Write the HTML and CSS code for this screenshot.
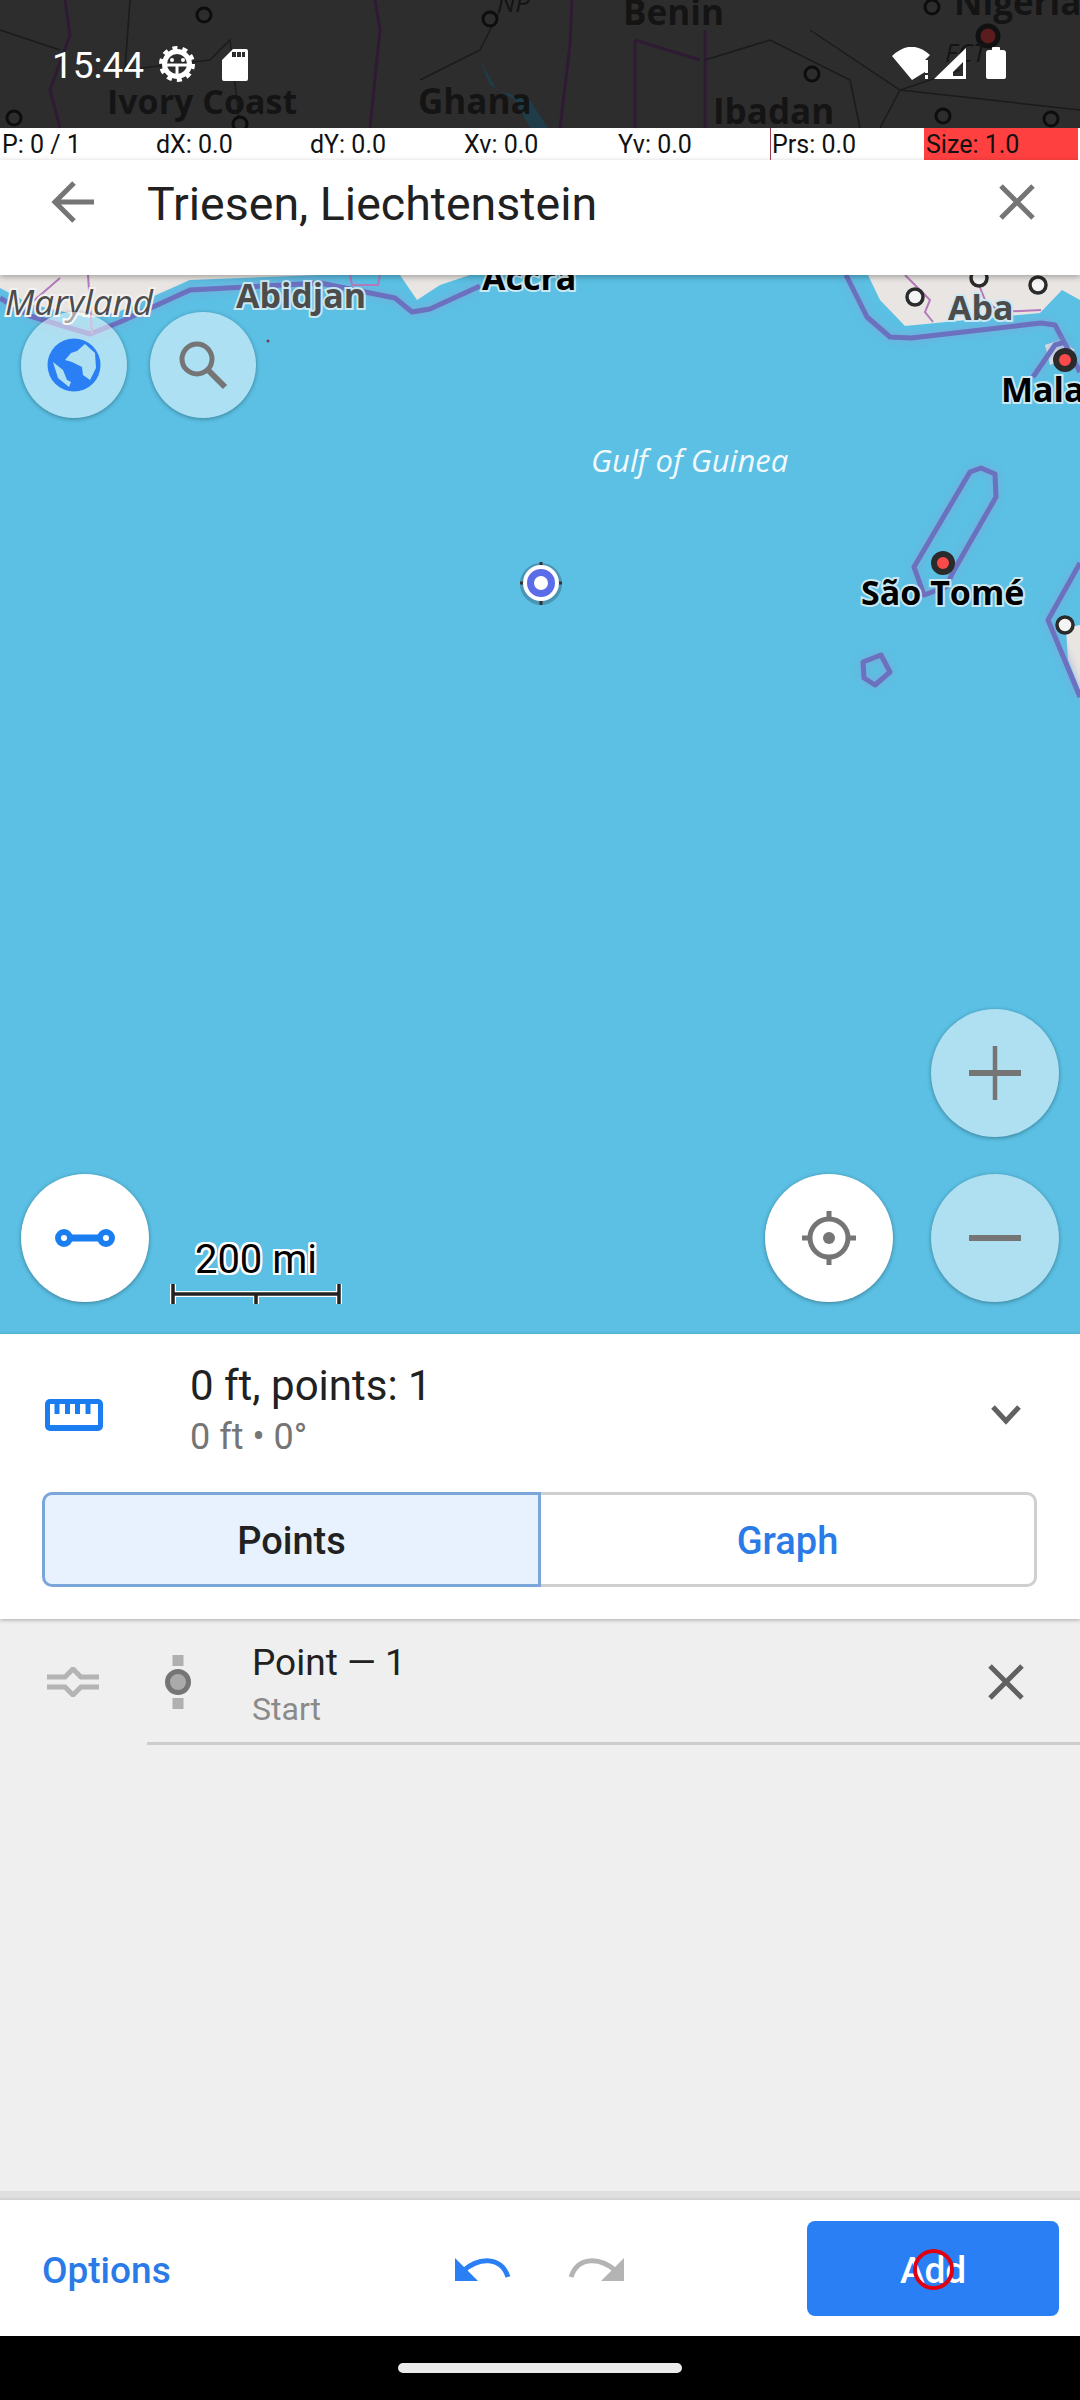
FILE: index.html
```html
<!DOCTYPE html>
<html lang="en">
<head>
<meta charset="UTF-8">
<meta name="viewport" content="width=device-width, initial-scale=1.0">
<title>Plan route</title>
<link rel="stylesheet" href="styles.css">
</head>
<body>
    <div class="map-area">
        <!-- the map itself, a free canvas of shapes and place names -->
        <svg class="map-canvas" viewBox="0 0 1080 1334">
            <rect class="water" width="1080" height="1334"/>

            <!-- land, west and east coast -->
            <path class="land" d="M0 275V288L30 304L90 318L118 312L190 280L320 275Z"/>
            <path class="land" d="M400 275L417 300L440 285L470 275Z"/>
            <path class="land" d="M868 275L880 300L905 326L1040 313L1062 290L1080 300V275Z"/>
            <path class="land" d="M1080 625L1066 628L1068 660L1080 690Z"/>
            <path class="land" d="M1045 345L1060 340L1075 350L1065 358L1050 365Z"/>

            <!-- sea borders -->
            <path class="sea-border" d="M0 298L30 316L90 334L120 322L190 290L320 283L395 298L412 312L430 309L480 286"/>
            <path class="sea-border" d="M846 275L867 317L890 337L911 338L1041 323L1055 325L1080 372"/>
            <path class="sea-border" d="M1033 377L1055 345L1065 342"/>
            <path class="sea-border" d="M970 472L981 468L995 474L996 497L953 572L946 587L924 595L914 567Z"/>
            <path class="sea-border" d="M863 662L881 655L890 672L875 685L864 678Z"/>
            <path class="sea-border" d="M1080 563L1048 620L1080 697"/>
            <path class="land-border" d="M30 304L60 278M88 275L92 334M350 275L352 285H378L380 275"/>
            <path class="land-border" d="M905 275L930 300L925 312L933 322M975 275L985 300L1000 312L1041 310"/>

            <!-- dimmed part under the status bar -->
            <rect class="dim-land" width="1080" height="128"/>
            <path class="dim-lake" d="M480 60L497 90L530 100L548 128H530L515 100L490 85Z"/>
            <path class="dim-border" d="M65 0L70 35L50 90L60 128M375 0L380 30L370 128M572 0L570 45L560 128M635 40V128M705 30V128M635 40L700 60"/>
            <path class="dim-line" d="M0 30L60 50M130 0L125 70L210 60L230 40L240 128M420 80L480 50L500 10M705 60L770 40L850 80L860 128M810 30L900 90L1080 110M880 128L900 90L960 70"/>

            <circle class="dim-town" cx="204" cy="15" r="7"/>
            <circle class="dim-town" cx="490" cy="19" r="7"/>
            <circle class="dim-town" cx="932" cy="7" r="7"/>
            <circle class="dim-town" cx="812" cy="74" r="7"/>
            <circle class="dim-town" cx="943" cy="116" r="7"/>
            <circle class="dim-town" cx="1051" cy="119" r="7"/>
            <circle class="dim-town" cx="14" cy="118" r="7"/>
            <circle class="dim-town" cx="240" cy="124" r="7"/>
            <circle class="dim-city" cx="988" cy="36" r="10"/>

            <text class="dim-label" x="623" y="25">Benin</text>
            <text class="dim-label" x="954" y="15">Nigeria</text>
            <text class="dim-label dim-country" x="107" y="114">Ivory Coast</text>
            <text class="dim-label" x="418" y="114">Ghana</text>
            <text class="dim-label" x="713" y="124">Ibadan</text>
            <text class="dim-small" x="497" y="12">NP</text>
            <text class="dim-small" x="945" y="62">FCT</text>

            <circle class="town" cx="915" cy="297" r="8"/>
            <circle class="town" cx="979" cy="278" r="8"/>
            <circle class="town" cx="1038" cy="285" r="8"/>
            <circle class="town" cx="1065" cy="625" r="8"/>
            <circle class="capital" cx="1065" cy="360" r="9"/>
            <circle class="capital" cx="943" cy="563" r="9"/>
            <circle class="speck" cx="268" cy="341" r="1.5"/>

            <text class="label label-gray label-italic" x="5" y="315">Maryland</text>
            <text class="label label-gray" x="236" y="308">Abidjan</text>
            <text class="label" x="482" y="290">Accra</text>
            <text class="label label-gray" x="948" y="320">Aba</text>
            <text class="label" x="1001" y="402">Malabo</text>
            <text class="label" x="861" y="605">São Tomé</text>
            <text class="sea-label" x="591" y="472">Gulf of Guinea</text>

            <!-- current location -->
            <circle class="loc-halo" cx="541" cy="584" r="21"/>
            <path class="loc-ticks" d="M541 562V566M541 600V605M520 583H524M558 583H562"/>
            <circle class="loc-outer" cx="541" cy="583" r="18"/>
            <circle class="loc-ring" cx="541" cy="583" r="10.5"/>
        </svg>

        <div class="status-bar">
            <span class="clock">15:44</span>
            <svg class="status-icon" width="40" height="40" viewBox="0 0 40 40">
                <circle cx="20" cy="20" r="12.5" fill="none" stroke="#fff" stroke-width="5"/>
                <circle cx="20" cy="20" r="16" fill="none" stroke="#fff" stroke-width="4" stroke-dasharray="5 5.05"/>
                <path d="M9 21H31M20 21V32" stroke="#fff" stroke-width="3" fill="none"/>
                <circle cx="15" cy="16" r="2" fill="#fff"/>
                <circle cx="26" cy="16" r="2" fill="#fff"/>
            </svg>
            <svg class="status-icon sd-icon" width="26" height="32" viewBox="0 0 26 32">
                <path fill-rule="evenodd" fill="#fff" d="M11 0H24Q26 0 26 2V30Q26 32 24 32H2Q0 32 0 30V11ZM10 3V8H14V3ZM15 3V8H19V3ZM20 3V8H23V3Z"/>
            </svg>
            <svg class="status-right" width="114" height="34" viewBox="892 47 114 34">
                <path fill="#fff" d="M892 56Q911 38 930 55L925 60V72L912 80Z"/>
                <path fill="#fff" d="M925 60H928V73H925ZM925 75H928V79H925Z"/>
                <path fill="#fff" fill-rule="evenodd" d="M934 79H966V48ZM953 76H963V62L953 72Z"/>
                <path fill="#fff" d="M992 50V48Q992 47 993 47H999Q1000 47 1000 48V50H1003Q1006 50 1006 53V77Q1006 79 1004 79H988Q986 79 986 77V53Q986 50 989 50Z"/>
            </svg>
        </div>

        <div class="pointer-bar">
            <span>P: 0 / 1</span>
            <span>dX: 0.0</span>
            <span>dY: 0.0</span>
            <span>Xv: 0.0</span>
            <span>Yv: 0.0</span>
            <span class="pointer-prs">Prs: 0.0</span>
            <span class="pointer-size">Size: 1.0</span>
        </div>

        <div class="search-bar">
            <svg class="back-icon" width="44" height="42" viewBox="0 0 44 42">
                <path d="M43 21H6M23 2L4 21L23 40" fill="none" stroke="#757575" stroke-width="5"/>
            </svg>
            <span class="search-text">Triesen, Liechtenstein</span>
            <svg class="clear-icon" width="36" height="36" viewBox="0 0 36 36">
                <path d="M2 2L34 34M34 2L2 34" fill="none" stroke="#757575" stroke-width="5"/>
            </svg>
        </div>

        <div class="map-controls">
            <div class="top-buttons">
                <button class="round-btn small glass">
                    <svg width="90" height="90" viewBox="-1 0 90 90">
                        <circle cx="44" cy="45" r="26.5" fill="#2a7ff5"/>
                        <path fill="#aee0f2" d="M55 24L47 31L41 33L35 40L42 42L52 47L53 55L60 60L66 48L65 33Z"/>
                        <path fill="#aee0f2" d="M23 42L33 50L37 60L41 62L39 67L28 58Z"/>
                    </svg>
                </button>
                <button class="round-btn small glass">
                    <svg width="56" height="56" viewBox="0 0 56 56">
                        <circle cx="22" cy="22" r="15" fill="none" stroke="#757575" stroke-width="5"/>
                        <path d="M33 33L50 50" stroke="#757575" stroke-width="6"/>
                    </svg>
                </button>
            </div>

            <div class="bottom-buttons">
                <button class="round-btn solid">
                    <svg width="60" height="24" viewBox="0 0 60 24">
                        <path d="M8 12H52" stroke="#1a7ef0" stroke-width="7"/>
                        <circle cx="9" cy="12" r="6" fill="#fff" stroke="#1a7ef0" stroke-width="6"/>
                        <circle cx="51" cy="12" r="6" fill="#fff" stroke="#1a7ef0" stroke-width="6"/>
                    </svg>
                </button>
                <div class="scale">
                    <span class="scale-text">200 mi</span>
                    <svg width="172" height="24" viewBox="0 0 172 24">
                        <path d="M3 2V22M169 2V22M86 12V22M3 12H169" fill="none" stroke="#fff" stroke-width="6"/>
                        <path d="M3 2V22M169 2V22M86 12V22M3 12H169" fill="none" stroke="#222" stroke-width="3.5"/>
                    </svg>
                </div>
                <button class="round-btn solid locate">
                    <svg width="56" height="56" viewBox="0 0 56 56">
                        <circle cx="28" cy="28" r="19" fill="none" stroke="#757575" stroke-width="5"/>
                        <circle cx="28" cy="28" r="6" fill="#757575"/>
                        <path d="M28 1V10M28 46V55M1 28H10M46 28H55" stroke="#757575" stroke-width="5"/>
                    </svg>
                </button>
                <div class="zoom-buttons">
                    <button class="round-btn glass">
                        <svg width="54" height="54" viewBox="0 0 54 54">
                            <path d="M27 0V54" stroke="#757575" stroke-width="4.5"/>
                            <path d="M1 27H53" stroke="#757575" stroke-width="6"/>
                        </svg>
                    </button>
                    <button class="round-btn glass">
                        <svg width="54" height="8" viewBox="0 0 54 8">
                            <path d="M1 4H53" stroke="#757575" stroke-width="6"/>
                        </svg>
                    </button>
                </div>
            </div>
        </div>
    </div>

    <div class="panel">
        <div class="summary">
            <svg class="ruler-icon" width="58" height="32" viewBox="0 0 58 32">
                <rect width="58" height="32" rx="5" fill="#1a7ef0"/>
                <rect x="5" y="5" width="48" height="21" fill="#fff"/>
                <path d="M12 5V15M22.5 5V15M32.5 5V15M43 5V15" stroke="#1a7ef0" stroke-width="5"/>
            </svg>
            <div class="summary-text">
                <div class="summary-title">0 ft, points: 1</div>
                <div class="summary-sub">0 ft • 0°</div>
            </div>
            <svg class="chevron" width="30" height="20" viewBox="0 0 30 20">
                <path d="M2 2L15 16L28 2" fill="none" stroke="#616161" stroke-width="5"/>
            </svg>
        </div>
        <div class="segmented">
            <div class="seg seg-active">Points</div>
            <div class="seg seg-other">Graph</div>
        </div>
    </div>

    <div class="point-list">
        <div class="point-row">
            <svg class="handle" width="52" height="30" viewBox="0 0 52 30">
                <path d="M0 10H18L26 2L34 10H52M0 20H18L26 28L34 20H52" fill="none" stroke="#b4b4b4" stroke-width="5"/>
            </svg>
            <svg class="point-icon" width="30" height="54" viewBox="0 0 30 54">
                <rect x="9.5" y="0" width="11" height="11" fill="#b0b0b0"/>
                <circle cx="15" cy="27" r="10.5" fill="#aaa" stroke="#757575" stroke-width="5"/>
                <rect x="9.5" y="43" width="11" height="11" fill="#b0b0b0"/>
            </svg>
            <div class="point-body">
                <div class="point-text">
                    <div class="point-title">Point — 1</div>
                    <div class="point-sub">Start</div>
                </div>
                <svg class="remove" width="36" height="36" viewBox="0 0 36 36">
                    <path d="M2 2L34 34M34 2L2 34" fill="none" stroke="#616161" stroke-width="5"/>
                </svg>
            </div>
        </div>
    </div>

    <div class="action-bar">
        <span class="options">Options</span>
        <svg class="undo" width="56" height="26" viewBox="0 0 56 26">
            <path d="M0 2V25H23Z" fill="#2a7ff5"/>
            <path d="M8 15C24 1 46 0 53 21" fill="none" stroke="#2a7ff5" stroke-width="5"/>
        </svg>
        <svg class="redo" width="56" height="26" viewBox="0 0 56 26">
            <path d="M56 2V25H33Z" fill="#b4b4b4"/>
            <path d="M48 15C32 1 10 0 3 21" fill="none" stroke="#b4b4b4" stroke-width="5"/>
        </svg>
        <button class="add-btn"><span class="add-text">Add</span><span class="touch-mark"></span></button>
    </div>

    <div class="nav-bar">
        <div class="home-pill"></div>
    </div>
</body>
</html>
```

FILE: styles.css
```css
* {
    box-sizing: border-box;
}
body {
    margin: 0;
    width: 1080px;
    height: 2400px;
    display: flex;
    flex-direction: column;
    overflow: hidden;
    font-family: Roboto, sans-serif;
    background-color: #000;
}
button {
    border: none;
    padding: 0;
    font-family: inherit;
}
svg {
    display: block;
    flex: none;
}

/* map */
.map-area {
    position: relative;
    height: 1334px;
    display: flex;
    flex-direction: column;
    flex: none;
}
.map-canvas {
    position: absolute;
    top: 0;
    left: 0;
    width: 1080px;
    height: 1334px;
}
.water { fill: #5bc0e4; }
.land { fill: #e9e5e2; }
.sea-border {
    fill: none;
    stroke: #6b70bf;
    stroke-width: 5;
    stroke-linejoin: round;
    filter: drop-shadow(0 0 4px #7fa6d8);
}
.land-border {
    fill: none;
    stroke: #b479bb;
    stroke-width: 2;
}
.dim-land { fill: #2e2d2e; }
.dim-lake { fill: #14475c; opacity: .6; }
.dim-border {
    fill: none;
    stroke: #2f1a33;
    stroke-width: 3;
}
.dim-line {
    fill: none;
    stroke: #1b1b1b;
    stroke-width: 1.5;
}
.dim-town {
    fill: #2e2d2e;
    stroke: #0d0d0d;
    stroke-width: 3;
}
.dim-city {
    fill: #5a1c1c;
    stroke: #111;
    stroke-width: 5;
}
.dim-label {
    font-family: "Open Sans", sans-serif;
    font-weight: 700;
    font-size: 35px;
    fill: #141414;
}
.dim-country {
    font-size: 34px;
}
.dim-small {
    font-family: "Open Sans", sans-serif;
    font-style: italic;
    font-size: 26px;
    fill: #141414;
}
.town {
    fill: #f4f4f4;
    stroke: #2b2b2b;
    stroke-width: 3.5;
}
.capital {
    fill: #fb4a4a;
    stroke: #2b2b2b;
    stroke-width: 6;
}
.speck { fill: #7a3a5a; }
.label {
    font-family: "Open Sans", sans-serif;
    font-weight: 700;
    font-size: 34px;
    fill: #000;
    stroke: #c9e8f2;
    stroke-width: 4px;
    paint-order: stroke;
}
.label-gray { fill: #4c4c4c; }
.label-italic {
    font-weight: 400;
    font-style: italic;
    font-size: 35px;
    stroke: #f2f2f2;
}
.sea-label {
    font-family: "Open Sans", sans-serif;
    font-style: italic;
    font-size: 31px;
    fill: #f1f9fc;
}
.loc-halo { fill: rgba(40,70,90,.35); }
.loc-ticks {
    stroke: #333;
    stroke-width: 3;
}
.loc-outer { fill: #fff; }
.loc-ring {
    fill: #fff;
    stroke: #5a6ce8;
    stroke-width: 7;
}

/* status bar */
.status-bar {
    position: relative;
    height: 128px;
    flex: none;
    display: flex;
    align-items: flex-start;
    padding: 44px 74px 0 52px;
    color: #fff;
}
.clock {
    font-size: 37px;
    line-height: 44px;
    width: 105px;
}
.sd-icon {
    margin-left: 25px;
    margin-top: 5px;
}
.status-right {
    margin-left: auto;
    margin-top: 3px;
}

/* pointer location strip */
.pointer-bar {
    position: relative;
    height: 32px;
    flex: none;
    display: grid;
    grid-template-columns: repeat(7, 154px);
    background-color: #fff;
    font-size: 25px;
    line-height: 34px;
    color: #111;
}
.pointer-bar span {
    padding-left: 2px;
}
.pointer-bar .pointer-prs {
    border-left: 1px solid #a04050;
    padding-left: 1px;
}
.pointer-size {
    background-color: #ff4040;
}

/* search bar */
.search-bar {
    position: relative;
    height: 115px;
    flex: none;
    display: flex;
    align-items: flex-start;
    padding: 21px 45px 0 51px;
    background-color: #fff;
    box-shadow: 0 2px 6px rgba(0,0,0,.3);
}
.search-text {
    font-size: 46.5px;
    line-height: 46px;
    margin-left: 52px;
    color: #212121;
}
.clear-icon {
    margin-left: auto;
    margin-top: 3px;
}

/* floating map buttons */
.map-controls {
    position: relative;
    flex: 1;
    display: flex;
    flex-direction: column;
    justify-content: space-between;
    padding: 37px 21px 32px;
}
.top-buttons {
    display: flex;
    gap: 23px;
}
.bottom-buttons {
    display: flex;
    align-items: flex-end;
}
.round-btn {
    width: 128px;
    height: 128px;
    border-radius: 50%;
    display: flex;
    align-items: center;
    justify-content: center;
    box-shadow: 0 1px 4px rgba(0,0,0,.35);
}
.round-btn.small {
    width: 106px;
    height: 106px;
}
.glass {
    background-color: #aee0f2;
}
.top-buttons .glass {
    background-color: rgba(255,255,255,.5);
}
.solid {
    background-color: #fff;
}
.scale {
    margin-left: 21px;
    margin-bottom: -4px;
    width: 172px;
    display: flex;
    flex-direction: column;
    align-items: center;
}
.scale-text {
    font-size: 40px;
    line-height: 48px;
    position: relative;
    top: 2px;
    color: #000;
    text-shadow: 2px 0 #fff, -2px 0 #fff, 0 2px #fff, 0 -2px #fff, 2px 2px #fff, -2px -2px #fff, 2px -2px #fff, -2px 2px #fff;
}
.locate {
    margin-left: auto;
}
.zoom-buttons {
    margin-left: 38px;
    display: flex;
    flex-direction: column;
    gap: 37px;
}

/* summary panel */
.panel {
    height: 285px;
    flex: none;
    background-color: #fff;
    padding: 0 43px 0 42px;
    position: relative;
    box-shadow: 0 1px 4px rgba(0,0,0,.3);
}
.summary {
    height: 158px;
    display: flex;
    align-items: center;
}
.ruler-icon {
    margin-left: 3px;
    margin-top: 4px;
}
.summary-text {
    margin-left: 87px;
    margin-top: -2px;
}
.summary-title {
    font-size: 42px;
    line-height: 50px;
    color: #212121;
}
.summary-sub {
    font-size: 36px;
    line-height: 52px;
    color: #757575;
}
.chevron {
    margin-left: auto;
    margin-right: 16px;
    margin-top: 4px;
}
.segmented {
    display: flex;
    height: 95px;
    font-size: 38px;
    font-weight: 500;
}
.seg {
    flex: 1;
    display: flex;
    align-items: center;
    justify-content: center;
    border-style: solid;
    border-width: 3px;
    padding-top: 2px;
}
.seg-active {
    background-color: #e8f2fe;
    border-color: #7ba6da;
    border-radius: 10px 0 0 10px;
    color: #212121;
}
.seg-other {
    border-color: #cfcfcf;
    border-left: none;
    border-radius: 0 10px 10px 0;
    color: #2a7ae8;
}

/* list of points */
.point-list {
    flex: 1;
    background-color: #efefef;
    border-bottom: 9px solid #dfdfdf;
}
.point-row {
    display: flex;
    align-items: flex-start;
    height: 126px;
}
.handle {
    margin: 48px 0 0 47px;
}
.point-icon {
    margin: 36px 0 0 64px;
}
.point-body {
    flex: 1;
    height: 100%;
    margin-left: -46px;
    padding: 0 56px 0 105px;
    border-bottom: 3px solid #cdcdcd;
    display: flex;
    align-items: flex-start;
    justify-content: space-between;
}
.point-title {
    font-size: 37px;
    line-height: 44px;
    margin-top: 22px;
    color: #212121;
}
.point-sub {
    font-size: 32px;
    line-height: 40px;
    margin-top: 4px;
    color: #8a8a8a;
}
.remove {
    margin-top: 45px;
}

/* bottom actions */
.action-bar {
    height: 136px;
    flex: none;
    display: flex;
    align-items: center;
    background-color: #fff;
    padding: 0 21px 0 42px;
    box-shadow: 0 -1px 3px rgba(0,0,0,.1);
}
.options {
    font-size: 37px;
    font-weight: 500;
    color: #2a7ae8;
    width: 413px;
    padding-top: 5px;
}
.undo {
    margin-top: 2px;
}
.redo {
    margin-left: 57px;
    margin-top: 2px;
}
.add-btn {
    position: relative;
    margin-left: auto;
    width: 252px;
    height: 95px;
    border-radius: 8px;
    background-color: #2a7ff5;
    color: #fff;
    font-size: 37px;
    font-weight: 500;
}
.add-text {
    display: block;
    padding-top: 4px;
}
.touch-mark {
    position: absolute;
    left: 106px;
    top: 28px;
    width: 41px;
    height: 41px;
    border: 4px solid #e00012;
    border-radius: 50%;
}

/* navigation */
.nav-bar {
    height: 64px;
    flex: none;
    display: flex;
    justify-content: center;
    padding-top: 27px;
    background-color: #000;
}
.home-pill {
    width: 284px;
    height: 10px;
    border-radius: 5px;
    background-color: #ebebeb;
}
```
